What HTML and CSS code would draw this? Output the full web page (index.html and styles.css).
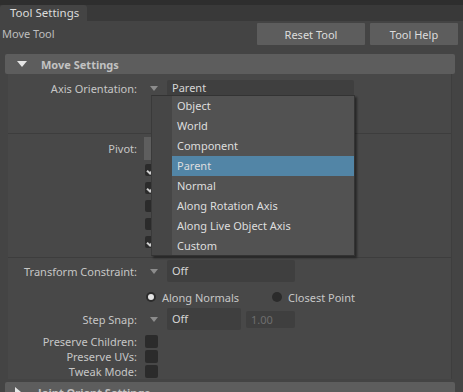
FILE: index.html
```html
<!DOCTYPE html>
<html>
  <head>
    <title>Tool Settings</title>
    <link rel="stylesheet" href="styles.css">
  </head>
  <body>
    <div class="tabbar">
      <div class="tab">Tool Settings</div>
    </div>
    <div class="toolbar">
      <span class="toolname">Move Tool</span>
      <button class="btn reset">Reset Tool</button>
      <button class="btn help">Tool Help</button>
    </div>
    <div class="section-header">
      <span class="tri-down"></span>
      Move Settings
    </div>
    <div class="frame">
      <div class="group axis">
        <div class="row">
          <span class="label">Axis Orientation:</span>
          <span class="arrow"></span>
          <span class="field wide">Parent</span>
        </div>
      </div>
      <div class="group pivot">
        <div class="row">
          <span class="label">Pivot:</span>
          <span class="pivot-bar"></span>
        </div>
        <div class="checks">
          <span class="check on"></span>
          <span class="check on"></span>
          <span class="check"></span>
          <span class="check"></span>
          <span class="check on"></span>
        </div>
      </div>
      <div class="row constraint">
        <span class="label">Transform Constraint:</span>
        <span class="arrow"></span>
        <span class="field mid">Off</span>
      </div>
      <div class="row radios">
        <span class="radio on"></span><span class="radio-text">Along Normals</span>
        <span class="radio"></span><span class="radio-text">Closest Point</span>
      </div>
      <div class="row snap">
        <span class="label">Step Snap:</span>
        <span class="arrow"></span>
        <span class="field short">Off</span>
        <span class="field num">1.00</span>
      </div>
      <div class="row small">
        <span class="label">Preserve Children:</span>
        <span class="box"></span>
      </div>
      <div class="row small">
        <span class="label">Preserve UVs:</span>
        <span class="box"></span>
      </div>
      <div class="row small">
        <span class="label">Tweak Mode:</span>
        <span class="box"></span>
      </div>
    </div>
    <div class="section-header closed">
      <span class="tri-right"></span>
      Joint Orient Settings
    </div>

    <div class="menu">
      <div class="gutter"></div>
      <ul class="items">
        <li>Object</li>
        <li>World</li>
        <li>Component</li>
        <li class="active">Parent</li>
        <li>Normal</li>
        <li>Along Rotation Axis</li>
        <li>Along Live Object Axis</li>
        <li>Custom</li>
      </ul>
    </div>
  </body>
</html>
```

FILE: styles.css
```css
body {
  margin: 0;
  background: #444444;
  color: #c6c6c6;
  font-family: "Noto Sans", "DejaVu Sans", sans-serif;
  font-size: 11px;
  overflow: hidden;
  height: 392px;
  position: relative;
}
.tabbar {
  height: 21px;
  background: #393939;
  border-top: 5px solid #2e2e2e;
  box-sizing: border-box;
  display: flex;
}
.tab {
  width: 87px;
  background: #444444;
  border-radius: 3px 3px 0 0;
  padding-left: 10px;
  box-sizing: border-box;
  line-height: 16px;
  color: #dcdcdc;
  font-size: 11.5px;
}
.toolbar {
  height: 33px;
  display: flex;
  align-items: flex-start;
  padding-top: 2px;
  box-sizing: border-box;
}
.toolname {
  padding-left: 2px;
  line-height: 22px;
  color: #bdbdbd;
  flex: 1;
}
.btn {
  font: inherit;
  color: #dcdcdc;
  background: #5d5d5d;
  border: none;
  border-radius: 1px;
  height: 22px;
  padding: 0;
}
.reset {
  width: 108px;
}
.help {
  width: 88px;
  margin-left: 5px;
  margin-right: 5px;
}
.section-header {
  margin: 0 8px 0 5px;
  height: 20px;
  background: #5d5d5d;
  border-radius: 2px;
  display: flex;
  align-items: center;
  font-weight: bold;
  color: #c2c2c2;
}
.tri-down {
  width: 0;
  height: 0;
  border-left: 5px solid transparent;
  border-right: 5px solid transparent;
  border-top: 6px solid #e6e6e6;
  margin: 0 14px 0 12px;
}
.tri-right {
  width: 0;
  height: 0;
  border-top: 5px solid transparent;
  border-bottom: 5px solid transparent;
  border-left: 6px solid #e6e6e6;
  margin: 0 17px 0 10px;
}
.closed {
  margin-top: 3px;
}
.frame {
  margin: 0 11px 0 8px;
  background: #484848;
  border-right: 1px solid #3e3e3e;
  height: 305px;
}
.group {
  border-bottom: 1px solid #3d3d3d;
}
.axis {
  height: 60px;
  padding-top: 6px;
  box-sizing: border-box;
}
.pivot {
  height: 124px;
  padding-top: 2px;
  box-sizing: border-box;
}
.row {
  display: flex;
  align-items: center;
  height: 16px;
}
.label {
  width: 129px;
  text-align: right;
  flex: none;
}
.arrow {
  width: 0;
  height: 0;
  border-left: 4px solid transparent;
  border-right: 4px solid transparent;
  border-top: 5px solid #8c8c8c;
  margin: 0 9px 0 13px;
}
.field {
  background: #3f3f3f;
  border-radius: 2px;
  height: 22px;
  line-height: 22px;
  padding-left: 5px;
  box-sizing: border-box;
  color: #d6d6d6;
}
.axis .field {
  height: 16px;
  line-height: 16px;
}
.wide {
  width: 187px;
}
.mid {
  width: 128px;
}
.short {
  width: 74px;
}
.num {
  width: 49px;
  height: 17px;
  line-height: 17px;
  margin-left: 5px;
  color: #6e6e6e;
}
.check {
  width: 12px;
  height: 12px;
  background: #2b2b2b;
  border-radius: 2px;
  margin-left: 8px;
}
.pivot .row {
  height: 24px;
}
.pivot-bar {
  width: 7px;
  height: 23px;
  background: #5e5e5e;
  margin-left: 7px;
}
.checks {
  display: flex;
  flex-direction: column;
  gap: 6px;
  padding-left: 129px;
  padding-top: 4px;
}
.check.on::after {
  content: "";
  display: block;
  width: 3px;
  height: 5px;
  margin: 3px 0 0 3px;
  border-right: 2px solid #d0d0d0;
  border-bottom: 2px solid #d0d0d0;
  transform: rotate(40deg);
}
.constraint {
  height: 22px;
  margin-top: 2px;
}
.radios {
  margin-top: 8px;
  padding-left: 138px;
  height: 14px;
}
.radio {
  width: 10px;
  height: 10px;
  border-radius: 50%;
  background: #2b2b2b;
  box-sizing: border-box;
}
.radio.on {
  border: 2px solid #2b2b2b;
  background: #e4e4e4;
}
.radio-text {
  margin-left: 6px;
  width: 110px;
}
.snap {
  height: 22px;
  margin-top: 4px;
}
.small {
  height: 15px;
}
.snap + .small {
  margin-top: 4px;
}
.box {
  width: 13px;
  height: 13px;
  background: #2b2b2b;
  border-radius: 2px;
  margin-left: 8px;
}
.menu {
  position: absolute;
  left: 151px;
  top: 95px;
  width: 204px;
  height: 161px;
  display: flex;
  background: #525252;
  box-shadow: 2px 2px 2px rgba(0, 0, 0, 0.45);
  border: 1px solid #333333;
  border-left-color: #3a3a3a;
  box-sizing: border-box;
}
.gutter {
  width: 20px;
  background: #464646;
}
.items {
  list-style: none;
  margin: 0;
  padding: 0;
  flex: 1;
}
.items li {
  height: 20px;
  line-height: 20px;
  padding-left: 5px;
  color: #dedede;
}
.items li.active {
  background: #5285a6;
}
```
